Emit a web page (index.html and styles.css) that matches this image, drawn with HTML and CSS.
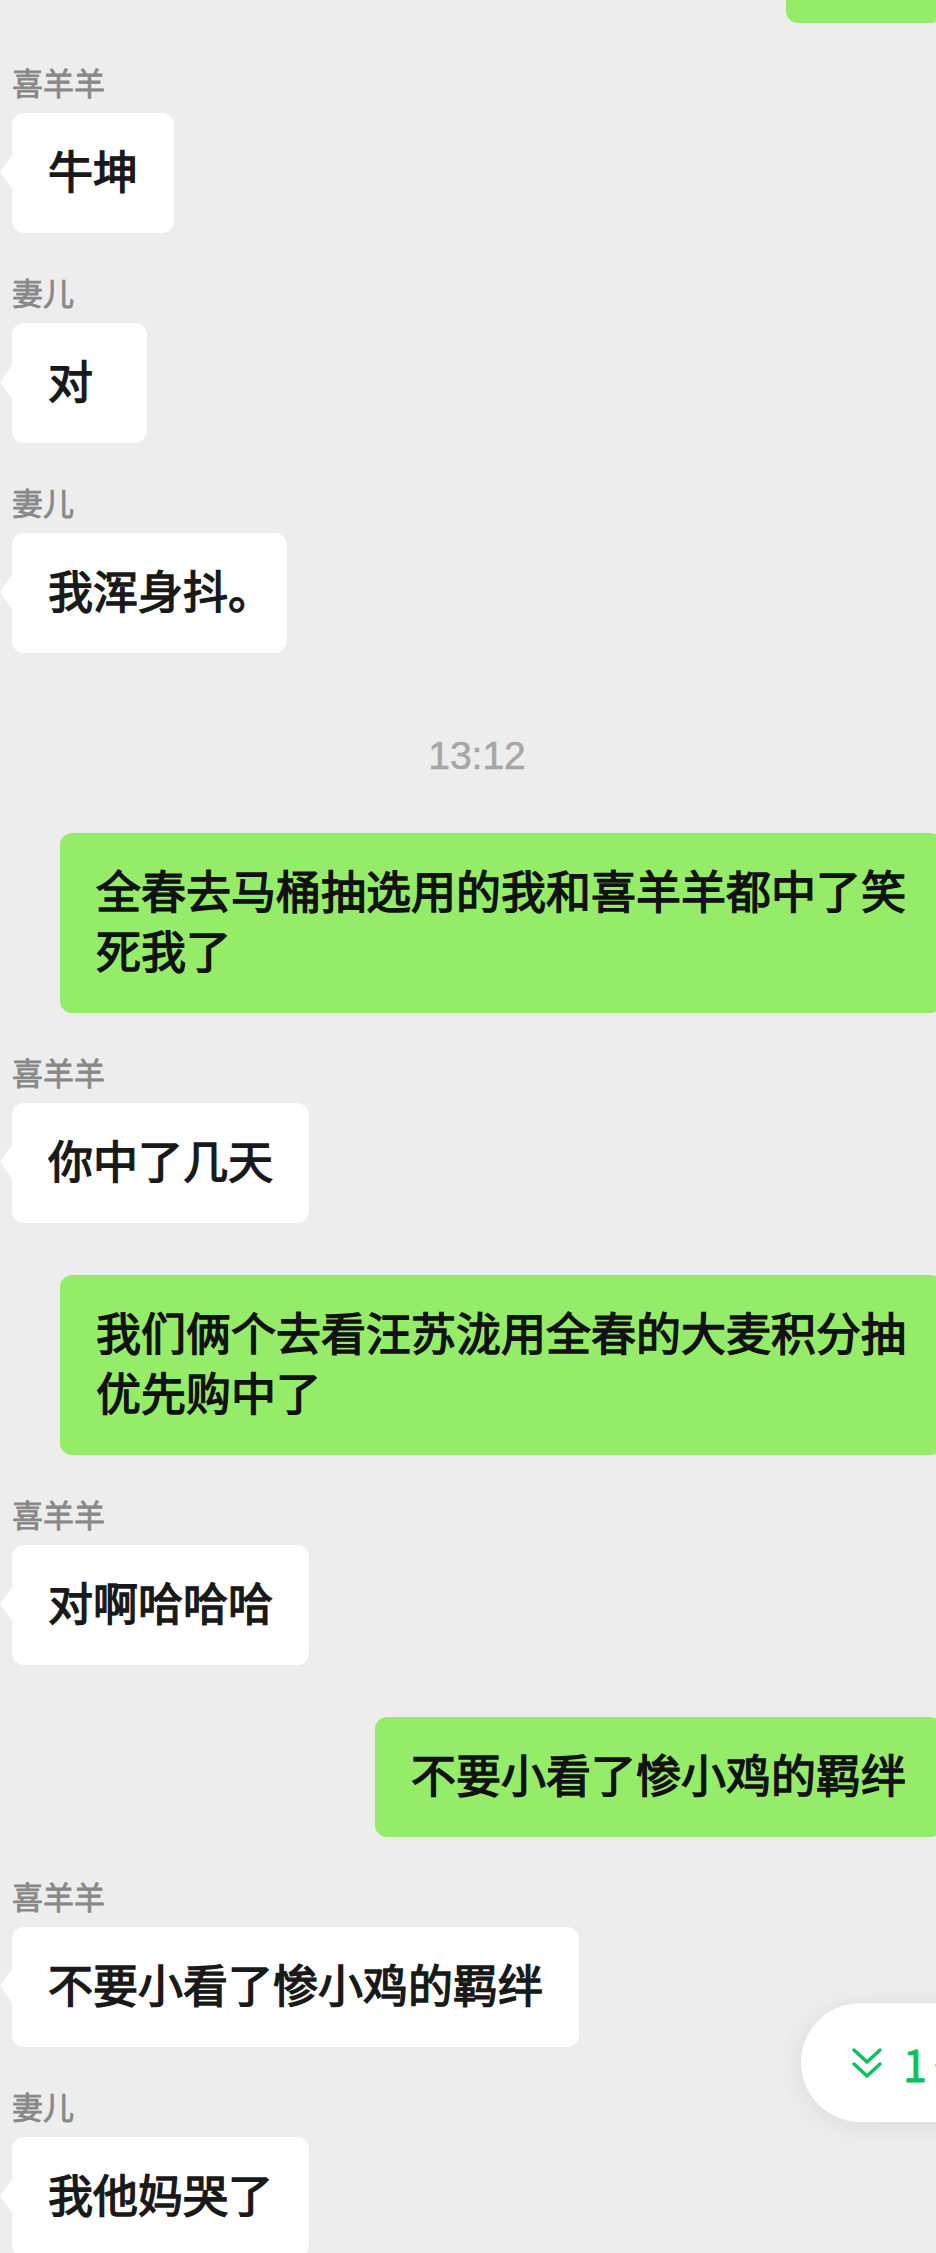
FILE: index.html
```html
<!DOCTYPE html>
<html lang="zh-CN">
<head>
  <meta charset="UTF-8" />
  <meta name="viewport" content="width=device-width, initial-scale=1.0"/>
  <title>群聊</title>
  <link rel="stylesheet" href="styles.css">
</head>
<body>
  <main class="chat">
    <!-- previous message, scrolled away above the top edge -->
    <div class="msg mine"><div class="bubble stub"></div></div>

    <div class="msg theirs">
      <div class="name">喜羊羊</div>
      <div class="bubble">牛坤</div>
    </div>

    <div class="msg theirs">
      <div class="name">妻儿</div>
      <div class="bubble">对</div>
    </div>

    <div class="msg theirs">
      <div class="name">妻儿</div>
      <div class="bubble">我浑身抖<span class="halt">。</span></div>
    </div>

    <div class="time">13:12</div>

    <div class="msg mine">
      <div class="bubble">全春去马桶抽选用的我和喜羊羊都中了笑死我了</div>
    </div>

    <div class="msg theirs">
      <div class="name">喜羊羊</div>
      <div class="bubble">你中了几天</div>
    </div>

    <div class="msg mine">
      <div class="bubble">我们俩个去看汪苏泷用全春的大麦积分抽优先购中了</div>
    </div>

    <div class="msg theirs">
      <div class="name">喜羊羊</div>
      <div class="bubble">对啊哈哈哈</div>
    </div>

    <div class="msg mine">
      <div class="bubble">不要小看了惨小鸡的羁绊</div>
    </div>

    <div class="msg theirs">
      <div class="name">喜羊羊</div>
      <div class="bubble">不要小看了惨小鸡的羁绊</div>
    </div>

    <div class="msg theirs">
      <div class="name">妻儿</div>
      <div class="bubble">我他妈哭了</div>
    </div>
  </main>

  <!-- new message jump button -->
  <div class="jump">
    <svg class="jump-icon" viewBox="0 0 32 32" width="32" height="32">
      <polyline points="3,3 16,15 29,3" />
      <polyline points="3,17 16,29 29,17" />
    </svg>
    <span>1<span class="jump-more">条新消息</span></span>
  </div>
</body>
</html>
```

FILE: styles.css
```css
html, body {
  margin: 0;
  padding: 0;
  overflow: hidden;
}

body {
  background: #ededed;
  font-family: "Noto Sans CJK SC", "Noto Sans", sans-serif;
  color: #191919;
  position: relative;
}

.chat {
  width: 930px;
  padding-left: 12px;
  margin-top: -97px;
  display: flex;
  flex-direction: column;
}

.msg {
  display: flex;
  flex-direction: column;
  align-items: flex-start;
  margin-top: 39px;
}

.msg.mine {
  align-items: flex-end;
  margin-top: 52px;
}

.msg:first-child {
  margin-top: 0;
}

.name {
  font-size: 31px;
  line-height: 40px;
  color: #888;
  -webkit-text-stroke: 0.8px #888;
  margin-bottom: 11px;
}

.bubble {
  position: relative;
  box-sizing: border-box;
  min-width: 135px;
  padding: 27px 36px 33px;
  font-size: 45px;
  line-height: 60px;
  background: #fff;
  border-radius: 12px;
  -webkit-text-stroke: 1.4px currentColor;
}

.bubble.stub {
  width: 156px;
  height: 120px;
}

.theirs .bubble::before {
  content: "";
  position: absolute;
  left: -12px;
  top: 41px;
  width: 13px;
  height: 36px;
  background: inherit;
  clip-path: polygon(100% 0, 0 50%, 100% 100%);
}

.mine .bubble {
  max-width: 882px;
  background: #95ec69;
  color: #111;
}

.halt {
  font-feature-settings: "halt";
}

.time {
  align-self: center;
  margin-top: 78px;
  font-family: "Liberation Sans", Arial, sans-serif;
  font-size: 39px;
  line-height: 50px;
  color: #a6a6a6;
  -webkit-text-stroke: 0.6px #a6a6a6;
}

.jump {
  position: absolute;
  top: 2003px;
  left: 801px;
  width: 240px;
  height: 119px;
  box-sizing: border-box;
  padding-left: 50px;
  display: flex;
  align-items: center;
  gap: 20px;
  background: #fff;
  border-radius: 60px 0 0 60px;
  box-shadow: 0 4px 28px rgba(0, 0, 0, 0.08);
  color: #07c160;
  font-size: 43px;
  white-space: nowrap;
  -webkit-text-stroke: 0.8px #07c160;
}

.jump-more {
  margin-left: 7px;
}

.jump-icon {
  flex: none;
  fill: none;
  stroke: #07c160;
  stroke-width: 3.5;
  stroke-linecap: round;
  stroke-linejoin: round;
}
```
